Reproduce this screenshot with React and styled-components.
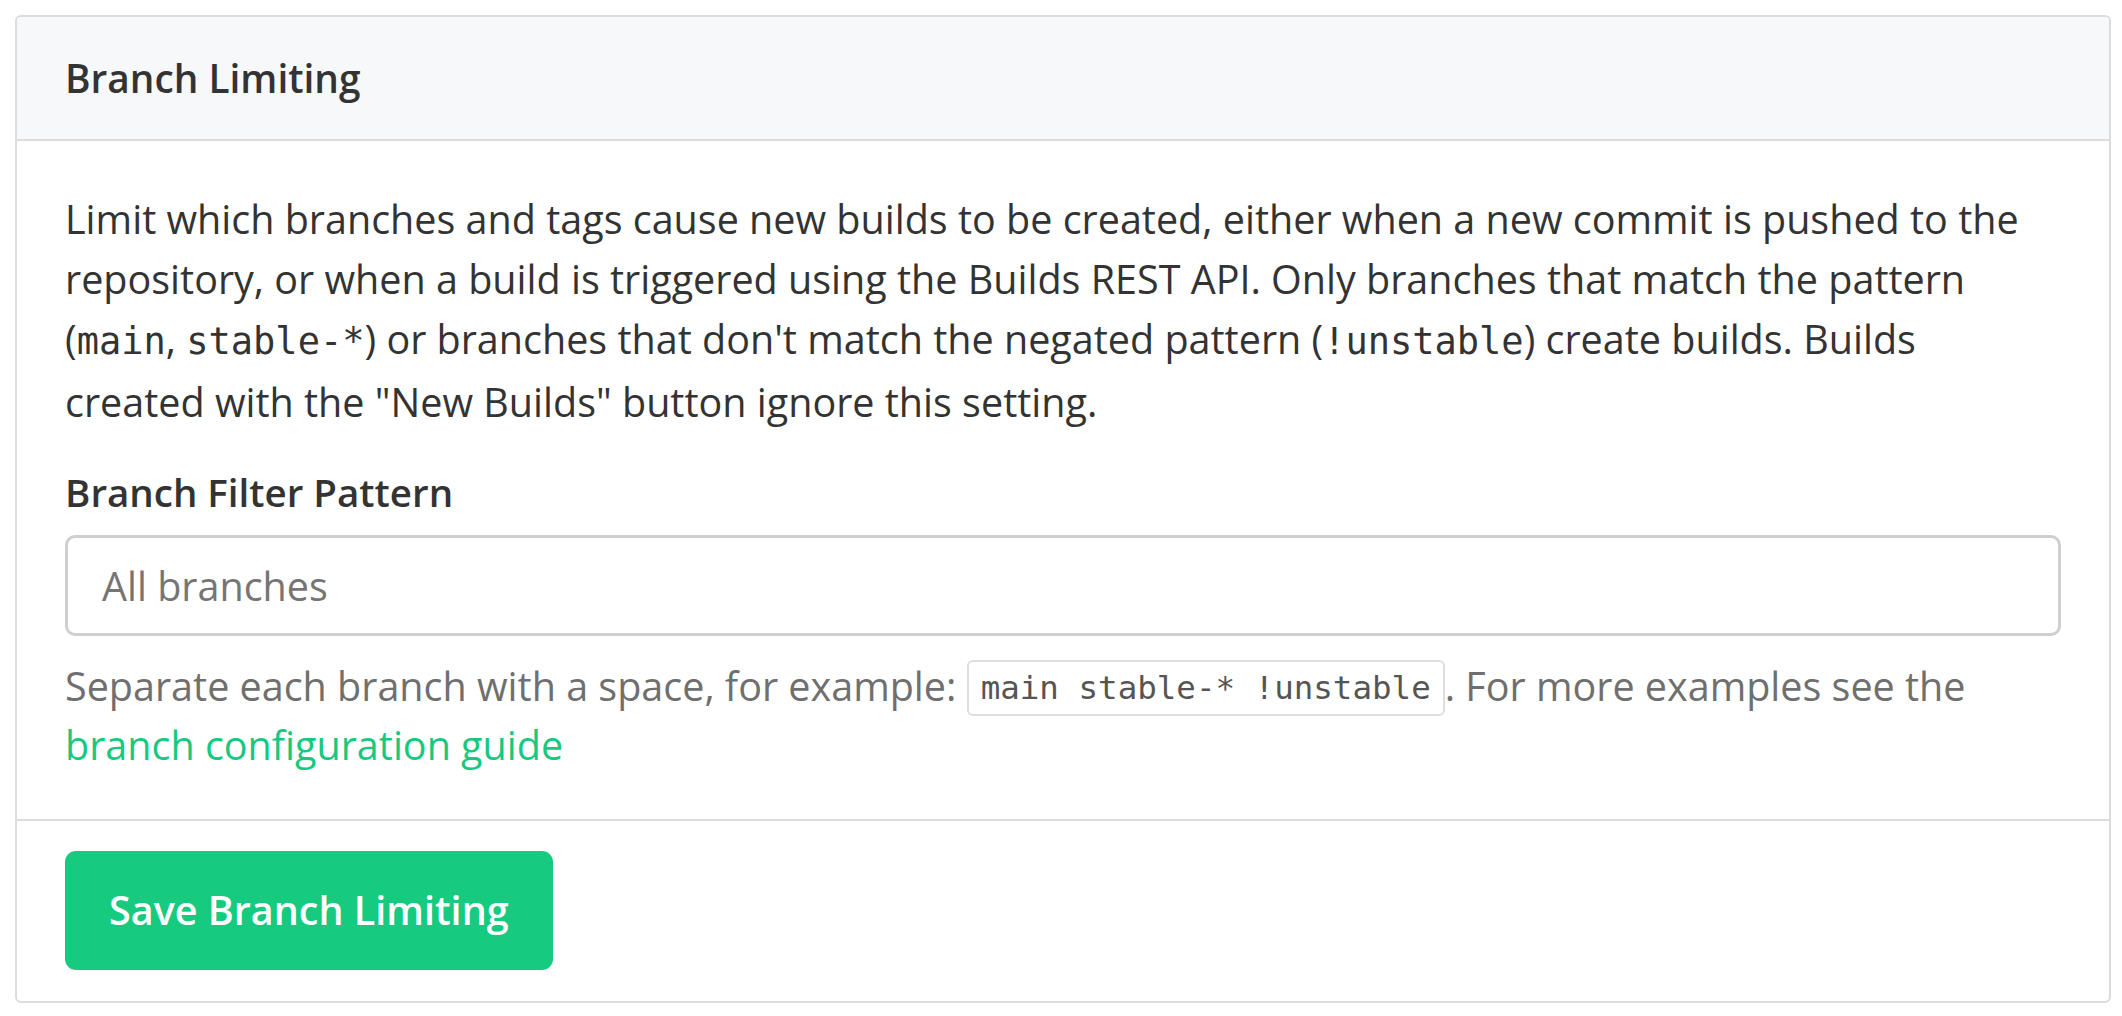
import React, { useState } from "react";
import styled, { createGlobalStyle } from "styled-components";

const GlobalStyle = createGlobalStyle`
  html, body {
    margin: 0;
    padding: 0;
    background: #fff;
  }
  body {
    font-family: "Open Sans", "Noto Sans", sans-serif;
    color: #333;
  }
  * {
    box-sizing: border-box;
  }
`;

const Page = styled.div`
  padding: 15px 11px 13px 15px;
`;

const Card = styled.section`
  border: 2px solid #dcdcdc;
  border-radius: 6px;
  background: #fff;
  overflow: hidden;
`;

const CardHeader = styled.header`
  background: #f7f8fa;
  border-bottom: 2px solid #dcdcdc;
  padding: 31px 48px 31px;
`;

const Title = styled.h2`
  margin: 0;
  font-size: 38.8px;
  line-height: 60px;
  font-weight: 600;
  color: #333;
`;

const CardBody = styled.div`
  padding: 48px 48px 44px;
  font-size: 39.5px;
  line-height: 60px;
`;

const Intro = styled.p`
  margin: 0 0 30px;
`;

const Code = styled.code`
  font-family: "DejaVu Sans Mono", "Liberation Mono", monospace;
  font-size: ${(p) => (p.$small ? "32.5px" : "37px")};
  color: #333;
  ${(p) =>
    p.$boxed &&
    `
    display: inline-block;
    line-height: 52px;
    padding: 0 12px;
    border: 2px solid #dedede;
    border-radius: 6px;
    color: #555;
    vertical-align: 2px;
  `}
`;

const Label = styled.label`
  display: block;
  font-size: 38.5px;
  font-weight: 600;
  margin-bottom: 13px;
`;

const Input = styled.input`
  display: block;
  width: 100%;
  height: 101px;
  padding: 0 34px;
  border: 3px solid #cfcfcf;
  border-radius: 10px;
  font-family: inherit;
  font-size: 39.5px;
  color: #333;
  outline: none;

  &::placeholder {
    color: #757575;
  }
`;

const Help = styled.p`
  margin: 21px 0 0;
  line-height: 59px;
  color: #6f6f6f;
`;

const Link = styled.a`
  color: #17c97f;
  text-decoration: none;
`;

const CardFooter = styled.footer`
  border-top: 2px solid #dcdcdc;
  padding: 30px 48px 31px;
`;

const SaveButton = styled.button`
  background: #16cb80;
  color: #fff;
  border: none;
  border-radius: 11px;
  padding: 29px 44px 30px;
  font-family: inherit;
  font-size: 39.5px;
  line-height: 60px;
  font-weight: 600;
  cursor: pointer;
`;

export default function App() {
  const [pattern, setPattern] = useState("");

  return (
    <>
      <GlobalStyle />
      <Page>
        <Card>
          <CardHeader>
            <Title>Branch Limiting</Title>
          </CardHeader>
          <CardBody>
            <Intro>
              Limit which branches and tags cause new builds to be created,
              either when a new commit is pushed to the repository, or when a
              build is triggered using the Builds REST API. Only branches that
              match the pattern (<Code>main</Code>, <Code>stable-*</Code>) or
              branches that don't match the negated pattern (
              <Code>!unstable</Code>) create builds. Builds created with the
              "New Builds" button ignore this setting.
            </Intro>
            <Label htmlFor="branch-filter">Branch Filter Pattern</Label>
            <Input
              id="branch-filter"
              type="text"
              placeholder="All branches"
              value={pattern}
              onChange={(e) => setPattern(e.target.value)}
            />
            <Help>
              Separate each branch with a space, for example:{" "}
              <Code $boxed $small>
                main stable-* !unstable
              </Code>
              . For more examples see the{" "}
              <Link href="#">branch configuration guide</Link>
            </Help>
          </CardBody>
          <CardFooter>
            <SaveButton type="button">Save Branch Limiting</SaveButton>
          </CardFooter>
        </Card>
      </Page>
    </>
  );
}
